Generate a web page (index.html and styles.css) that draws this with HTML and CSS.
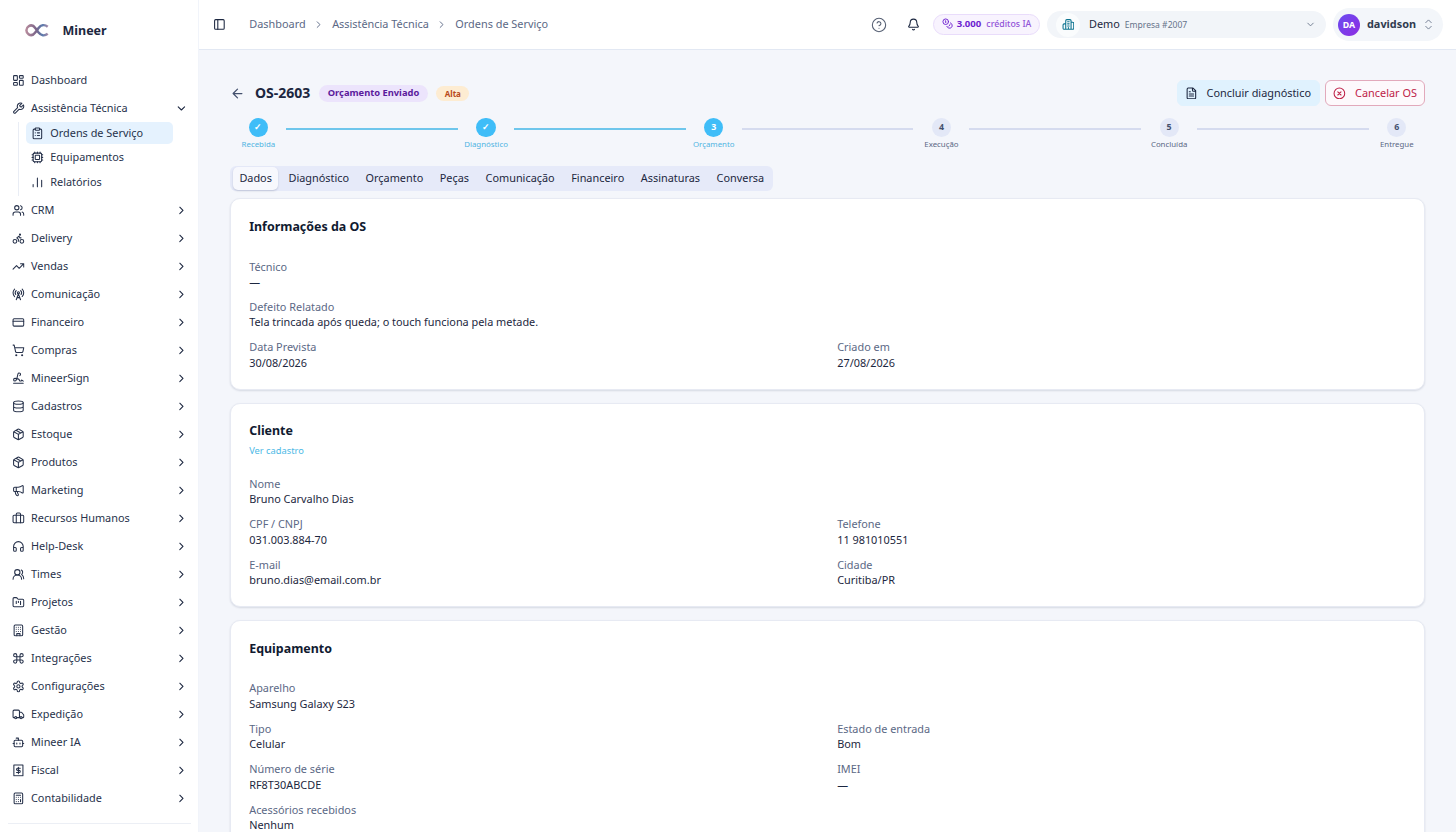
FILE: index.html
```
<!DOCTYPE html>
<html lang="pt-BR">
<head>
<meta charset="utf-8">
<title>Mineer</title>
<link rel="stylesheet" href="styles.css">
</head>
<body>
<svg class="defs" aria-hidden="true">
<symbol id="dash" viewBox="0 0 24 24"><rect width="7" height="9" x="3" y="3" rx="1"/><rect width="7" height="5" x="14" y="3" rx="1"/><rect width="7" height="9" x="14" y="12" rx="1"/><rect width="7" height="5" x="3" y="16" rx="1"/></symbol>
<symbol id="wrench" viewBox="0 0 24 24"><path d="M14.7 6.3a1 1 0 0 0 0 1.4l1.6 1.6a1 1 0 0 0 1.4 0l3.77-3.77a6 6 0 0 1-7.94 7.94l-6.91 6.91a2.12 2.12 0 0 1-3-3l6.91-6.91a6 6 0 0 1 7.94-7.94l-3.76 3.76z"/></symbol>
<symbol id="clip" viewBox="0 0 24 24"><rect width="8" height="4" x="8" y="2" rx="1"/><path d="M16 4h2a2 2 0 0 1 2 2v14a2 2 0 0 1-2 2H6a2 2 0 0 1-2-2V6a2 2 0 0 1 2-2h2M12 11h4M12 16h4M8 11h.01M8 16h.01"/></symbol>
<symbol id="cpu" viewBox="0 0 24 24"><rect width="16" height="16" x="4" y="4" rx="2"/><rect width="8" height="8" x="8" y="8" rx="1"/><path d="M12 2v2M12 20v2M2 12h2M20 12h2M17 2v2M17 20v2M2 17h2M2 7h2M20 17h2M20 7h2M7 2v2M7 20v2"/></symbol>
<symbol id="bars" viewBox="0 0 24 24"><path d="M12 20V4M20 20V8M4 20v-4"/></symbol>
<symbol id="users" viewBox="0 0 24 24"><path d="M16 21v-2a4 4 0 0 0-4-4H6a4 4 0 0 0-4 4v2M22 21v-2a4 4 0 0 0-3-3.87M16 3.13a4 4 0 0 1 0 7.75"/><circle cx="9" cy="7" r="4"/></symbol>
<symbol id="bike" viewBox="0 0 24 24"><circle cx="18.5" cy="17.5" r="3.5"/><circle cx="5.5" cy="17.5" r="3.5"/><circle cx="15" cy="5" r="1"/><path d="M12 17.5V14l-3-3 4-3 2 3h2"/></symbol>
<symbol id="trend" viewBox="0 0 24 24"><path d="m22 7-8.5 8.5-5-5L2 17M16 7h6v6"/></symbol>
<symbol id="tower" viewBox="0 0 24 24"><path d="M4.9 16.1C1 12.2 1 5.8 4.9 1.9M7.8 4.7a6.14 6.14 0 0 0-.8 7.5"/><circle cx="12" cy="9" r="2"/><path d="M16.2 4.8c2 2 2.26 5.11.8 7.47M19.1 1.9a9.96 9.96 0 0 1 0 14.1M9.5 18h5M8 22l4-11 4 11"/></symbol>
<symbol id="card" viewBox="0 0 24 24"><rect width="20" height="14" x="2" y="5" rx="2"/><path d="M2 10h20"/></symbol>
<symbol id="cart" viewBox="0 0 24 24"><circle cx="8" cy="21" r="1"/><circle cx="19" cy="21" r="1"/><path d="M2.05 2.05h2l2.66 12.42a2 2 0 0 0 2 1.58h9.78a2 2 0 0 0 1.95-1.57l1.65-7.43H5.12"/></symbol>
<symbol id="sign" viewBox="0 0 24 24"><path d="m21 17-2.156-1.868A.5.5 0 0 0 18 15.5v.5a1 1 0 0 1-1 1h-2a1 1 0 0 1-1-1c0-2.545-3.991-3.97-8.5-4a1 1 0 0 0 0 5c4.153 0 4.745-11.295 5.708-13.5a2.5 2.5 0 1 1 3.31 3.284M3 21h18"/></symbol>
<symbol id="db" viewBox="0 0 24 24"><ellipse cx="12" cy="5" rx="9" ry="3"/><path d="M3 5v14a9 3 0 0 0 18 0V5M3 12a9 3 0 0 0 18 0"/></symbol>
<symbol id="box" viewBox="0 0 24 24"><path d="M11 21.73a2 2 0 0 0 2 0l7-4A2 2 0 0 0 21 16V8a2 2 0 0 0-1-1.73l-7-4a2 2 0 0 0-2 0l-7 4A2 2 0 0 0 3 8v8a2 2 0 0 0 1 1.73zM12 22V12M3.3 7l8.7 5 8.7-5M7.5 4.27l9 5.15"/></symbol>
<symbol id="mega" viewBox="0 0 24 24"><path d="M11 6a13 13 0 0 0 8.4-2.8A1 1 0 0 1 21 4v12a1 1 0 0 1-1.6.8A13 13 0 0 0 11 14H5a2 2 0 0 1-2-2V8a2 2 0 0 1 2-2zM6 14a12 12 0 0 0 2.4 7.2 2 2 0 0 0 3.2-2.4A8 8 0 0 1 10 14M8 6v8"/></symbol>
<symbol id="brief" viewBox="0 0 24 24"><path d="M16 20V4a2 2 0 0 0-2-2h-4a2 2 0 0 0-2 2v16"/><rect width="20" height="14" x="2" y="6" rx="2"/></symbol>
<symbol id="head" viewBox="0 0 24 24"><path d="M3 14h3a2 2 0 0 1 2 2v3a2 2 0 0 1-2 2H5a2 2 0 0 1-2-2v-7a9 9 0 0 1 18 0v7a2 2 0 0 1-2 2h-1a2 2 0 0 1-2-2v-3a2 2 0 0 1 2-2h3"/></symbol>
<symbol id="team" viewBox="0 0 24 24"><path d="M18 21a8 8 0 0 0-16 0"/><circle cx="10" cy="8" r="5"/><path d="M22 20c0-3.37-2-6.5-4-8a5 5 0 0 0-.45-8.3"/></symbol>
<symbol id="folder" viewBox="0 0 24 24"><path d="M4 20h16a2 2 0 0 0 2-2V8a2 2 0 0 0-2-2h-7.93a2 2 0 0 1-1.66-.9l-.82-1.2A2 2 0 0 0 7.93 3H4a2 2 0 0 0-2 2v13c0 1.1.9 2 2 2ZM8 10v4M12 10v2M16 10v6"/></symbol>
<symbol id="build" viewBox="0 0 24 24"><rect width="16" height="20" x="4" y="2" rx="2"/><path d="M9 22v-4h6v4M8 6h.01M16 6h.01M12 6h.01M12 10h.01M12 14h.01M16 10h.01M16 14h.01M8 10h.01M8 14h.01"/></symbol>
<symbol id="cmd" viewBox="0 0 24 24"><path d="M15 6v12a3 3 0 1 0 3-3H6a3 3 0 1 0 3 3V6a3 3 0 1 0-3 3h12a3 3 0 1 0-3-3"/></symbol>
<symbol id="gear" viewBox="0 0 24 24"><path d="M12.22 2h-.44a2 2 0 0 0-2 2v.18a2 2 0 0 1-1 1.73l-.43.25a2 2 0 0 1-2 0l-.15-.08a2 2 0 0 0-2.73.73l-.22.38a2 2 0 0 0 .73 2.73l.15.1a2 2 0 0 1 1 1.72v.51a2 2 0 0 1-1 1.74l-.15.09a2 2 0 0 0-.73 2.73l.22.38a2 2 0 0 0 2.73.73l.15-.08a2 2 0 0 1 2 0l.43.25a2 2 0 0 1 1 1.73V20a2 2 0 0 0 2 2h.44a2 2 0 0 0 2-2v-.18a2 2 0 0 1 1-1.73l.43-.25a2 2 0 0 1 2 0l.15.08a2 2 0 0 0 2.73-.73l.22-.39a2 2 0 0 0-.73-2.73l-.15-.08a2 2 0 0 1-1-1.74v-.5a2 2 0 0 1 1-1.74l.15-.09a2 2 0 0 0 .73-2.73l-.22-.38a2 2 0 0 0-2.73-.73l-.15.08a2 2 0 0 1-2 0l-.43-.25a2 2 0 0 1-1-1.73V4a2 2 0 0 0-2-2z"/><circle cx="12" cy="12" r="3"/></symbol>
<symbol id="truck" viewBox="0 0 24 24"><path d="M14 18V6a2 2 0 0 0-2-2H4a2 2 0 0 0-2 2v11a1 1 0 0 0 1 1h2M15 18H9M19 18h2a1 1 0 0 0 1-1v-3.65a1 1 0 0 0-.22-.624l-3.48-4.35A1 1 0 0 0 17.52 8H14"/><circle cx="17" cy="18" r="2"/><circle cx="7" cy="18" r="2"/></symbol>
<symbol id="bot" viewBox="0 0 24 24"><path d="M12 8V4H8"/><rect width="16" height="12" x="4" y="8" rx="2"/><path d="M2 14h2M20 14h2M15 13v2M9 13v2"/></symbol>
<symbol id="fiscal" viewBox="0 0 24 24"><path d="M3.500 2h17v20h-17zM15.5 8H10.500a2 2 0 0 0 0 4h3a2 2 0 0 1 0 4H8.500M12 6v12"/></symbol>
<symbol id="calc" viewBox="0 0 24 24"><rect width="16" height="20" x="4" y="2" rx="2"/><path d="M8 6h8M16 14v4M16 10h.01M12 10h.01M8 10h.01M12 14h.01M8 14h.01M12 18h.01M8 18h.01"/></symbol>
<symbol id="right" viewBox="0 0 24 24"><path d="m9 18 6-6-6-6"/></symbol>
<symbol id="down" viewBox="0 0 24 24"><path d="m6 9 6 6 6-6"/></symbol>
<symbol id="panel" viewBox="0 0 24 24"><rect width="18" height="18" x="3" y="3" rx="2"/><path d="M9 3v18"/></symbol>
<symbol id="help" viewBox="0 0 24 24"><circle cx="12" cy="12" r="10"/><path d="M9.09 9a3 3 0 0 1 5.83 1c0 2-3 3-3 3M12 17h.01"/></symbol>
<symbol id="bell" viewBox="0 0 24 24"><path d="M10.268 21a2 2 0 0 0 3.464 0M3.262 15.326A1 1 0 0 0 4 17h16a1 1 0 0 0 .74-1.673C19.41 13.956 18 12.499 18 8A6 6 0 0 0 6 8c0 4.499-1.411 5.956-2.738 7.326"/></symbol>
<symbol id="coins" viewBox="0 0 24 24"><circle cx="8" cy="8" r="6"/><path d="M18.09 10.37A6 6 0 1 1 10.34 18M7 6h1v4M16.71 13.88l.7.71-2.82 2.82"/></symbol>
<symbol id="company" viewBox="0 0 24 24"><path d="M7 21V5a2 2 0 0 1 2-2h6a2 2 0 0 1 2 2v16M7 11H4a2 2 0 0 0-2 2v6a2 2 0 0 0 2 2h16a2 2 0 0 0 2-2v-9a2 2 0 0 0-2-2h-3M10.500 7h3M10.500 11h3M10.500 15h3M12 18v3"/></symbol>
<symbol id="updown" viewBox="0 0 24 24"><path d="m6 16 6 6 6-6M6 8l6-6 6 6"/></symbol>
<symbol id="back" viewBox="0 0 24 24"><path d="m12 19-7-7 7-7M19 12H5"/></symbol>
<symbol id="doc" viewBox="0 0 24 24"><path d="M15 2H6a2 2 0 0 0-2 2v16a2 2 0 0 0 2 2h12a2 2 0 0 0 2-2V7ZM14 2v4a2 2 0 0 0 2 2h4M10 9H8M16 13H8M16 17H8"/></symbol>
<symbol id="cancel" viewBox="0 0 24 24"><circle cx="12" cy="12" r="10"/><path d="m15 9-6 6M9 9l6 6"/></symbol>
</svg>
<div class="app">
<aside class="sidebar">
  <div class="brand">
    <svg class="logo" viewBox="0 0 23 12"><defs><linearGradient id="lg" x1="0" x2="1"><stop offset="0" stop-color="#b58a9c"/><stop offset=".45" stop-color="#7a6488"/><stop offset=".75" stop-color="#5a7bae"/><stop offset="1" stop-color="#a58aa8"/></linearGradient></defs><path d="M21.800 2.600C18.800 0.300 15.200 1 13 3.800L10 8C8.200 10.500 5.600 11.200 3.500 9.900C.6 8.100.6 3.900 3.500 2.100C5.600.8 8.200 1.500 10 4L13 8.200C15.200 11 18.800 11.700 21.800 9.400" fill="none" stroke="url(#lg)" stroke-width="2.400"/></svg>
    <span>Mineer</span>
  </div>
  <nav class="nav">
    <a class="item"><svg class="ic"><use href="#dash"/></svg><span>Dashboard</span></a>
    <a class="item"><svg class="ic"><use href="#wrench"/></svg><span>Assistência Técnica</span><svg class="ic chev"><use href="#down"/></svg></a>
    <div class="sub">
      <a class="subitem active"><svg class="ic"><use href="#clip"/></svg><span>Ordens de Serviço</span></a>
      <a class="subitem"><svg class="ic"><use href="#cpu"/></svg><span>Equipamentos</span></a>
      <a class="subitem"><svg class="ic"><use href="#bars"/></svg><span>Relatórios</span></a>
    </div>
    <a class="item"><svg class="ic"><use href="#users"/></svg><span>CRM</span><svg class="ic chev"><use href="#right"/></svg></a>
    <a class="item"><svg class="ic"><use href="#bike"/></svg><span>Delivery</span><svg class="ic chev"><use href="#right"/></svg></a>
    <a class="item"><svg class="ic"><use href="#trend"/></svg><span>Vendas</span><svg class="ic chev"><use href="#right"/></svg></a>
    <a class="item"><svg class="ic"><use href="#tower"/></svg><span>Comunicação</span><svg class="ic chev"><use href="#right"/></svg></a>
    <a class="item"><svg class="ic"><use href="#card"/></svg><span>Financeiro</span><svg class="ic chev"><use href="#right"/></svg></a>
    <a class="item"><svg class="ic"><use href="#cart"/></svg><span>Compras</span><svg class="ic chev"><use href="#right"/></svg></a>
    <a class="item"><svg class="ic"><use href="#sign"/></svg><span>MineerSign</span><svg class="ic chev"><use href="#right"/></svg></a>
    <a class="item"><svg class="ic"><use href="#db"/></svg><span>Cadastros</span><svg class="ic chev"><use href="#right"/></svg></a>
    <a class="item"><svg class="ic"><use href="#box"/></svg><span>Estoque</span><svg class="ic chev"><use href="#right"/></svg></a>
    <a class="item"><svg class="ic"><use href="#box"/></svg><span>Produtos</span><svg class="ic chev"><use href="#right"/></svg></a>
    <a class="item"><svg class="ic"><use href="#mega"/></svg><span>Marketing</span><svg class="ic chev"><use href="#right"/></svg></a>
    <a class="item"><svg class="ic"><use href="#brief"/></svg><span>Recursos Humanos</span><svg class="ic chev"><use href="#right"/></svg></a>
    <a class="item"><svg class="ic"><use href="#head"/></svg><span>Help-Desk</span><svg class="ic chev"><use href="#right"/></svg></a>
    <a class="item"><svg class="ic"><use href="#team"/></svg><span>Times</span><svg class="ic chev"><use href="#right"/></svg></a>
    <a class="item"><svg class="ic"><use href="#folder"/></svg><span>Projetos</span><svg class="ic chev"><use href="#right"/></svg></a>
    <a class="item"><svg class="ic"><use href="#build"/></svg><span>Gestão</span><svg class="ic chev"><use href="#right"/></svg></a>
    <a class="item"><svg class="ic"><use href="#cmd"/></svg><span>Integrações</span><svg class="ic chev"><use href="#right"/></svg></a>
    <a class="item"><svg class="ic"><use href="#gear"/></svg><span>Configurações</span><svg class="ic chev"><use href="#right"/></svg></a>
    <a class="item"><svg class="ic"><use href="#truck"/></svg><span>Expedição</span><svg class="ic chev"><use href="#right"/></svg></a>
    <a class="item"><svg class="ic"><use href="#bot"/></svg><span>Mineer IA</span><svg class="ic chev"><use href="#right"/></svg></a>
    <a class="item"><svg class="ic"><use href="#fiscal"/></svg><span>Fiscal</span><svg class="ic chev"><use href="#right"/></svg></a>
    <a class="item"><svg class="ic"><use href="#calc"/></svg><span>Contabilidade</span><svg class="ic chev"><use href="#right"/></svg></a>
  </nav>
  <div class="side-foot"></div>
</aside>
<div class="content">
  <header class="top">
    <svg class="ic panel"><use href="#panel"/></svg>
    <div class="crumbs"><span>Dashboard</span><svg class="ic"><use href="#right"/></svg><span>Assistência Técnica</span><svg class="ic"><use href="#right"/></svg><span>Ordens de Serviço</span></div>
    <svg class="ic help"><use href="#help"/></svg>
    <svg class="ic bell"><use href="#bell"/></svg>
    <div class="credits"><svg class="ic"><use href="#coins"/></svg><b>3.000</b><span>créditos IA</span></div>
    <div class="company"><div class="co-icon"><svg class="ic"><use href="#company"/></svg></div><span class="co-name">Demo</span><span class="co-id">Empresa #2007</span><svg class="ic co-chev"><use href="#down"/></svg></div>
    <div class="user"><div class="avatar">DA</div><b>davidson</b><svg class="ic"><use href="#updown"/></svg></div>
  </header>
  <main class="main">
    <div class="titlebar">
      <svg class="ic back"><use href="#back"/></svg>
      <h1>OS-2603</h1>
      <span class="badge sent">Orçamento Enviado</span>
      <span class="badge high">Alta</span>
      <button class="btn primary"><svg class="ic"><use href="#doc"/></svg>Concluir diagnóstico</button>
      <button class="btn danger"><svg class="ic"><use href="#cancel"/></svg>Cancelar OS</button>
    </div>
    <div class="stepper">
      <div class="step done"><i>✓</i><span>Recebida</span></div><div class="line done"></div>
      <div class="step done"><i>✓</i><span>Diagnóstico</span></div><div class="line done"></div>
      <div class="step done"><i>3</i><span>Orçamento</span></div><div class="line"></div>
      <div class="step"><i>4</i><span>Execução</span></div><div class="line"></div>
      <div class="step"><i>5</i><span>Concluída</span></div><div class="line"></div>
      <div class="step"><i>6</i><span>Entregue</span></div>
    </div>
    <div class="tabs"><span class="tab on">Dados</span><span class="tab">Diagnóstico</span><span class="tab">Orçamento</span><span class="tab">Peças</span><span class="tab">Comunicação</span><span class="tab">Financeiro</span><span class="tab">Assinaturas</span><span class="tab">Conversa</span></div>
    <section class="card">
      <h2>Informações da OS</h2>
      <dl class="fields">
        <div class="wide"><dt>Técnico</dt><dd>—</dd></div>
        <div class="wide"><dt>Defeito Relatado</dt><dd>Tela trincada após queda; o touch funciona pela metade.</dd></div>
        <div><dt>Data Prevista</dt><dd>30/08/2026</dd></div>
        <div><dt>Criado em</dt><dd>27/08/2026</dd></div>
      </dl>
    </section>
    <section class="card">
      <h2>Cliente</h2>
      <a class="link">Ver cadastro</a>
      <dl class="fields">
        <div class="wide"><dt>Nome</dt><dd>Bruno Carvalho Dias</dd></div>
        <div><dt>CPF / CNPJ</dt><dd>031.003.884-70</dd></div>
        <div><dt>Telefone</dt><dd>11 981010551</dd></div>
        <div><dt>E-mail</dt><dd>bruno.dias@email.com.br</dd></div>
        <div><dt>Cidade</dt><dd>Curitiba/PR</dd></div>
      </dl>
    </section>
    <section class="card">
      <h2>Equipamento</h2>
      <dl class="fields">
        <div class="wide"><dt>Aparelho</dt><dd>Samsung Galaxy S23</dd></div>
        <div><dt>Tipo</dt><dd>Celular</dd></div>
        <div><dt>Estado de entrada</dt><dd>Bom</dd></div>
        <div><dt>Número de série</dt><dd>RF8T30ABCDE</dd></div>
        <div><dt>IMEI</dt><dd>—</dd></div>
        <div class="wide"><dt>Acessórios recebidos</dt><dd>Nenhum</dd></div>
      </dl>
    </section>
  </main>
</div>
</div>
</body>
</html>
```

FILE: styles.css
```
* { box-sizing: border-box; margin: 0; padding: 0; }
body { font-family: "Noto Sans", sans-serif; font-size: 10.88px; line-height: 16px; color: #1c2740; height: 832px; overflow: hidden; background: #f4f6fb; }
.defs { display: none; }
.ic { width: 12.8px; height: 12.8px; fill: none; stroke: currentColor; stroke-width: 2; stroke-linecap: round; stroke-linejoin: round; flex: none; display: block; }
.app { display: flex; height: 832px; }

.sidebar { width: 199px; flex: none; background: #fff; border-right: 1px solid #f1f4fa; display: flex; flex-direction: column; }
.brand { height: 66px; flex: none; display: flex; align-items: center; padding: 0 0 5px 25px; gap: 13.500px; font-size: 12.500px; font-weight: 700; }
.logo { width: 24px; height: 12.500px; }
.item { height: 28px; display: flex; align-items: center; padding: 0 10px 0 12.200px; gap: 6px; color: #27324b; }
.item .ic { margin-top: 1px; }
.item .chev { margin-left: auto; color: #1c2740; }
.sub { margin-left: 18px; border-left: 1px solid #e9edf5; padding: 0 25px 3px 6.500px; height: 74px; display: flex; flex-direction: column; justify-content: space-between; }
.subitem { height: 22px; line-height: 15px; display: flex; align-items: center; padding-left: 5.500px; gap: 6.500px; border-radius: 5px; color: #27324b; }
.subitem span { padding-bottom: 1.200px; }
.subitem .ic { margin-top: .5px; }
.subitem.active { background: #e5f2fe; }
.side-foot { height: 10px; flex: none; border-top: 1px solid #eceff5; margin: 11px 7px 0 8px; }

.content { flex: 1; min-width: 0; display: flex; flex-direction: column; }
.top { height: 50px; flex: none; background: #fff; border-bottom: 1px solid #e2e8f3; display: flex; align-items: center; padding: 0 13px 0 13.500px; }
.panel { color: #1c2740; }
.crumbs { display: flex; align-items: center; margin-left: 24px; gap: 7.700px; color: #5b6885; padding-bottom: 1px; }
.crumbs .ic { width: 11.200px; height: 11.200px; margin-top: 1px; }
.help { width: 16px; height: 16px; margin-left: auto; color: #555f73; stroke-width: 1.6; }
.bell { margin-left: 20px; width: 13px; height: 13px; color: #1c2740; }
.credits { margin-left: 13px; width: 107px; height: 21px; margin-bottom: 1px; border: 1px solid #e9dcfb; background: #f8f3fe; border-radius: 11px; display: flex; align-items: center; padding-left: 8px; font-size: 9.600px; color: #6d1fd0; }
.credits .ic { width: 11.200px; height: 11.200px; margin-right: 4px; }
.credits b { font-weight: 700; }
.credits span { font-size: 8.8px; font-weight: 500; color: #9254d8; margin-left: 5px; }
.company { margin-left: 7px; width: 279px; height: 27px; border-radius: 14px; background: #f2f5f9; display: flex; align-items: center; padding: 0 9.500px; }
.co-icon { width: 24px; height: 24px; border-radius: 12px; background: #fafcfd; display: flex; align-items: center; justify-content: center; color: #0e7490; }
.co-name { margin-left: 9px; padding-bottom: 1px; }
.co-id { margin-left: 5px; font-size: 8.550px; color: #66738a; }
.co-chev { margin-left: auto; width: 11px; height: 11px; color: #6b778c; }
.user { margin-left: 7.500px; width: 110px; height: 33px; border-radius: 17px; background: #f3f6fa; display: flex; align-items: center; padding-left: 5px; color: #303b50; }
.avatar { width: 22px; height: 22px; border-radius: 50%; background: linear-gradient(135deg, #6a4cf0, #8e2de2); color: #fff; font-size: 8.800px; font-weight: 700; display: flex; align-items: center; justify-content: center; margin-right: 7px; }
.user b { font-weight: 700; padding-bottom: 1.500px; }
.user .ic { width: 11px; height: 11px; margin-left: 7px; color: #6b778c; }

.main { padding: 30px 31.200px 0 31.400px; display: flex; flex-direction: column; flex: 1; min-height: 0; overflow: hidden; }
.titlebar { height: 26px; flex: none; display: flex; align-items: center; }
.back { color: #44516e; width: 15px; height: 15px; }
h1 { font-size: 14px; line-height: 20px; font-weight: 700; margin-left: 9.500px; }
.badge { border-radius: 9px; font-weight: 700; white-space: nowrap; }
.sent { margin-left: 9px; height: 17px; line-height: 16px; padding: 0 8.500px; font-size: 9.330px; background: #ece4fc; color: #5b1a9c; }
.high { margin-left: 8.500px; height: 15px; line-height: 15px; padding: 0 8.500px; font-size: 8px; background: #fdecd2; color: #b8481a; }
.btn { height: 26px; display: flex; align-items: center; border-radius: 6px; border: 1px solid #e0f2fe; font: inherit; line-height: 15px; padding-bottom: 2px; color: #1c2740; white-space: nowrap; }
.btn .ic { margin-top: 2px; }
.primary { margin-left: auto; width: 143px; padding-left: 7px; background: #e0f2fe; gap: 9px; }
.danger { margin-left: 5px; width: 100px; padding-left: 7.500px; background: #fdf9fc; border-color: #e2a9bb; color: #be2349; gap: 9px; }

.stepper { display: flex; margin-top: 11.500px; flex: none; height: 49px; }
.step { width: 56px; flex: none; display: flex; flex-direction: column; align-items: center; font-size: 7.850px; color: #5b6885; }
.step i { width: 19.200px; height: 19.200px; border-radius: 50%; background: #e3e8f7; color: #44516e; font-style: normal; font-weight: 700; font-size: 8.800px; display: flex; align-items: center; justify-content: center; }
.step span { line-height: 12px; margin-top: 1px; }
.step.done { color: #4fb4e2; }
.step.done i { background: #3fbdf8; color: #fff; }
.line { flex: 1; height: 2px; background: #d5dbef; margin-top: 10.500px; }
.line.done { background: #6ec6ec; }

.tabs { height: 25.500px; flex: none; align-self: flex-start; margin-top: -1px; padding: 0 2.500px; background: #e6eaf9; border-radius: 6px; display: flex; align-items: center; gap: 3.550px; }
.tab { height: 23px; line-height: 22px; padding: 0 6.500px; border-radius: 5px; }
.tab.on { background: #f7f8fd; box-shadow: 0 1px 2px rgba(30, 40, 80, .2); }

.card { flex: none; background: #fff; border: 1px solid #e7eaf3; border-radius: 10px; box-shadow: 0 1px 2px rgba(30, 40, 80, .14); padding: 18.400px 17.800px 19.100px; margin-bottom: 12.700px; }
.tabs + .card { margin-top: 7.400px; }
h2 { font-size: 12.440px; line-height: 17px; font-weight: 700; color: #101a30; }
.link { display: block; font-size: 9.300px; line-height: 13px; color: #4bb9e6; margin: 5px 0 -5.600px; }
.fields { margin-top: 23.900px; display: grid; grid-template-columns: 1fr 1fr; column-gap: 19.200px; row-gap: 9.600px; line-height: 15.400px; }
.wide { grid-column: 1 / -1; }
dt { color: #5b6885; }
```
